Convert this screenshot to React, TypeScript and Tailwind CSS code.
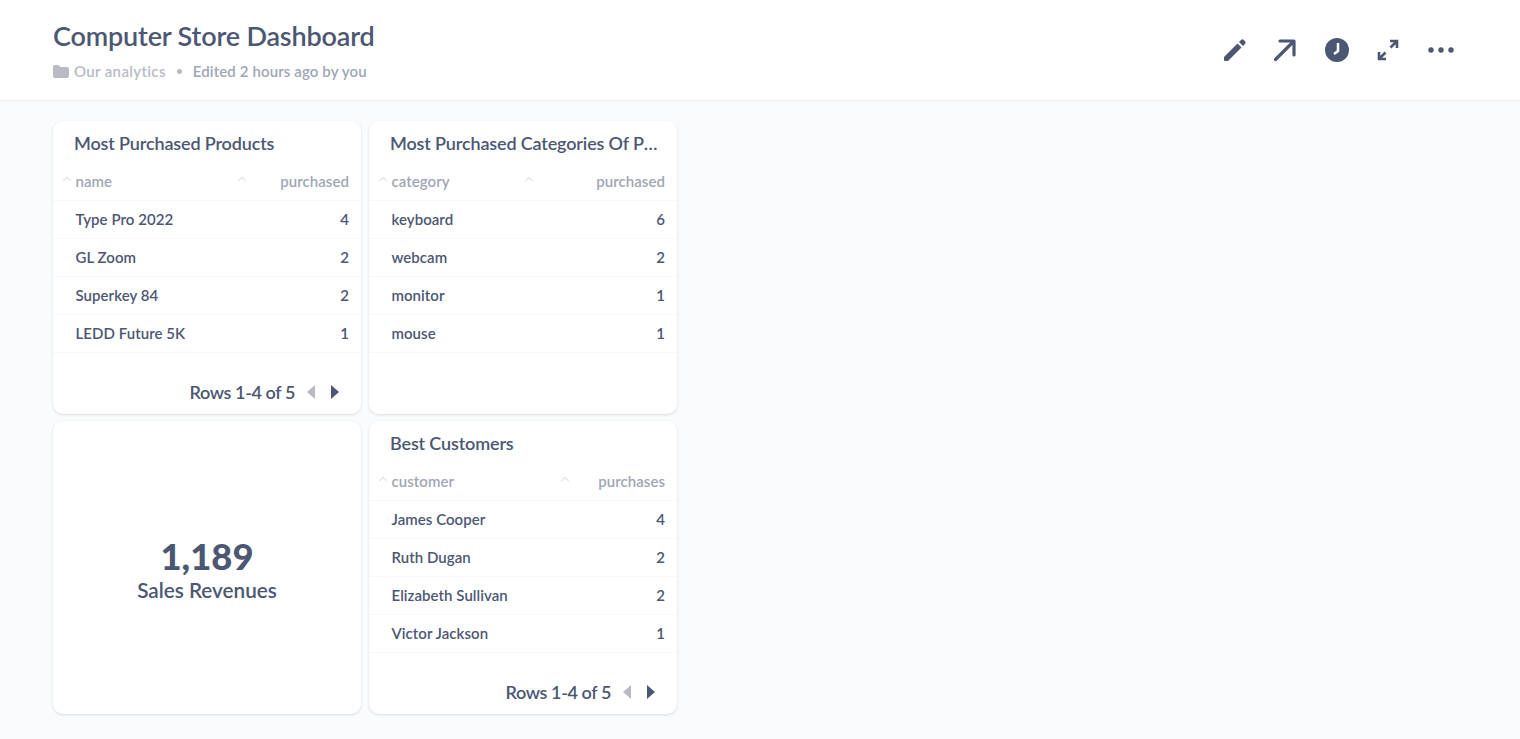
import { ChevronUp } from "lucide-react"

const products = [
  ["Type Pro 2022", "4"],
  ["GL Zoom", "2"],
  ["Superkey 84", "2"],
  ["LEDD Future 5K", "1"],
]
const categories = [
  ["keyboard", "6"],
  ["webcam", "2"],
  ["monitor", "1"],
  ["mouse", "1"],
]
const customers = [
  ["James Cooper", "4"],
  ["Ruth Dugan", "2"],
  ["Elizabeth Sullivan", "2"],
  ["Victor Jackson", "1"],
]

interface TableCardProps {
  title: string
  columns: [string, string]
  rows: string[][]
  nameWidth: string
  pager?: boolean
}

function TableCard({ title, columns, rows, nameWidth, pager }: TableCardProps) {
  return (
    <div className="flex h-[293px] flex-col rounded-[10px] bg-white shadow-[0_1px_3px_rgba(0,0,0,0.13)]">
      <div className="h-[42px] truncate pl-[21px] pr-[18px] pt-[10px] text-[18px] leading-[25px] font-semibold tracking-[-0.15px] text-[#4c5773]">
        {title}
      </div>
      <div className="flex h-[38px] items-center border-b border-[#f7f8fa] pl-[22.5px] pr-3 text-[15px] font-semibold tracking-[0.05px] text-[#a0a6b5]">
        <ChevronUp size={14} strokeWidth={2.5} className="-mt-[5px] -ml-[16px] mr-[2px] text-[#e6e8ec]" />
        <span className={nameWidth}>{columns[0]}</span>
        <ChevronUp size={14} strokeWidth={2.5} className="-mt-[5px] text-[#e6e8ec]" />
        <span className="flex-1 text-right">{columns[1]}</span>
      </div>
      {rows.map((row) => (
        <div
          key={row[0]}
          className="flex h-[38px] items-center justify-between border-b border-[#f7f8fa] pl-[22.5px] pr-3 text-[15px] font-semibold tracking-[0.05px] text-[#4c5773]"
        >
          <span>{row[0]}</span>
          <span>{row[1]}</span>
        </div>
      ))}
      {pager && (
        <div className="flex flex-1 items-end justify-end pb-[9px] pr-[22px]">
          <span className="text-[18px] leading-[25px] font-semibold tracking-[-0.4px] text-[#4c5773]">Rows 1-4 of 5</span>
          <svg width="8" height="14" viewBox="0 0 8 14" className="mb-[6px] ml-[12px]">
            <path d="M8 0v14L0 7z" fill="#b8bbc3" />
          </svg>
          <svg width="8" height="14" viewBox="0 0 8 14" className="mb-[6px] ml-[16px]">
            <path d="M0 0v14l8-7z" fill="#4c5773" />
          </svg>
        </div>
      )}
    </div>
  )
}

export default function App() {
  return (
    <div className="h-[739px] overflow-hidden bg-[#f9fbfc] font-['Lato',sans-serif]">
      {/* Header */}
      <div className="flex h-[101px] items-start justify-between border-b border-[#f0f0f0] bg-white pl-[53px] pr-[66px]">
        <div>
          <h1 className="mt-[19px] text-[27px] leading-[34px] font-semibold tracking-[-0.17px] text-[#4c5773]">Computer Store Dashboard</h1>
          <div className="mt-[8px] flex items-center text-[15px] leading-[20px] font-semibold">
            <svg width="16" height="13" viewBox="0 0 16 13" className="mr-[5px]">
              <path
                d="M0 2a2 2 0 0 1 2-2h3.500l2 2H14a2 2 0 0 1 2 2v7a2 2 0 0 1-2 2H2a2 2 0 0 1-2-2z"
                fill="#b8bbc3"
              />
            </svg>
            <span className="tracking-[0.35px] text-[#b8bbc3]">Our analytics</span>
            <span className="mx-[11px] h-[5px] w-[5px] rounded-full bg-[#b8bbc3]" />
            <span className="tracking-[0.12px] text-[#a0a6b5]">Edited 2 hours ago by you</span>
          </div>
        </div>
        <div className="mt-[38px] flex items-center text-[#4c5773]">
          <svg width="24" height="24" viewBox="0 0 24 24" fill="currentColor">
            <path d="M1 19 14.500 5.500l4 4L5 23H2a1 1 0 0 1-1-1z" />
            <path d="M16 4 18 2a2 2 0 0 1 2.800 0l1.200 1.200a2 2 0 0 1 0 2.800L20 8z" />
          </svg>
          <svg width="24" height="24" viewBox="0 0 24 24" fill="none" stroke="currentColor" strokeWidth="3.200" className="ml-[26px]">
            <path d="M2.500 21.500 20 4" strokeLinecap="round" />
            <path d="M7 3h14v14" strokeLinecap="round" strokeLinejoin="round" />
          </svg>
          <svg width="24" height="24" viewBox="0 0 24 24" className="ml-[28px]">
            <circle cx="12" cy="12" r="12" fill="currentColor" />
            <path d="M13 5v8l-4 3" fill="none" stroke="#fff" strokeWidth="2.500" />
          </svg>
          <svg width="22" height="22" viewBox="0 0 22 22" fill="none" stroke="currentColor" strokeWidth="2.600" className="ml-[28px]">
            <path d="M13 2h7v7M20 2l-6.500 6.500M9 20H2v-7M2 20l6.500-6.500" />
          </svg>
          <svg width="26" height="6" viewBox="0 0 26 6" fill="currentColor" className="ml-[29px]">
            <circle cx="3" cy="3" r="2.700" />
            <circle cx="13" cy="3" r="2.700" />
            <circle cx="23" cy="3" r="2.700" />
          </svg>
        </div>
      </div>

      {/* Cards */}
      <div className="grid grid-cols-[308px_308px] gap-x-2 gap-y-[7px] pl-[53px] pt-5">
        <TableCard title="Most Purchased Products" columns={["name", "purchased"]} rows={products} nameWidth="w-[159px]" pager />
        <TableCard title="Most Purchased Categories Of Products" columns={["category", "purchased"]} rows={categories} nameWidth="w-[130px]" />
        <div className="flex h-[293px] flex-col items-center justify-center rounded-[10px] bg-white pt-[1px] text-[#4c5773] shadow-[0_1px_3px_rgba(0,0,0,0.13)]">
          <div className="text-[36.400px] leading-[44px] font-black">1,189</div>
          <div className="text-[20.700px] leading-[24px] font-semibold">Sales Revenues</div>
        </div>
        <TableCard title="Best Customers" columns={["customer", "purchases"]} rows={customers} nameWidth="w-[166px]" pager />
      </div>
    </div>
  )
}
